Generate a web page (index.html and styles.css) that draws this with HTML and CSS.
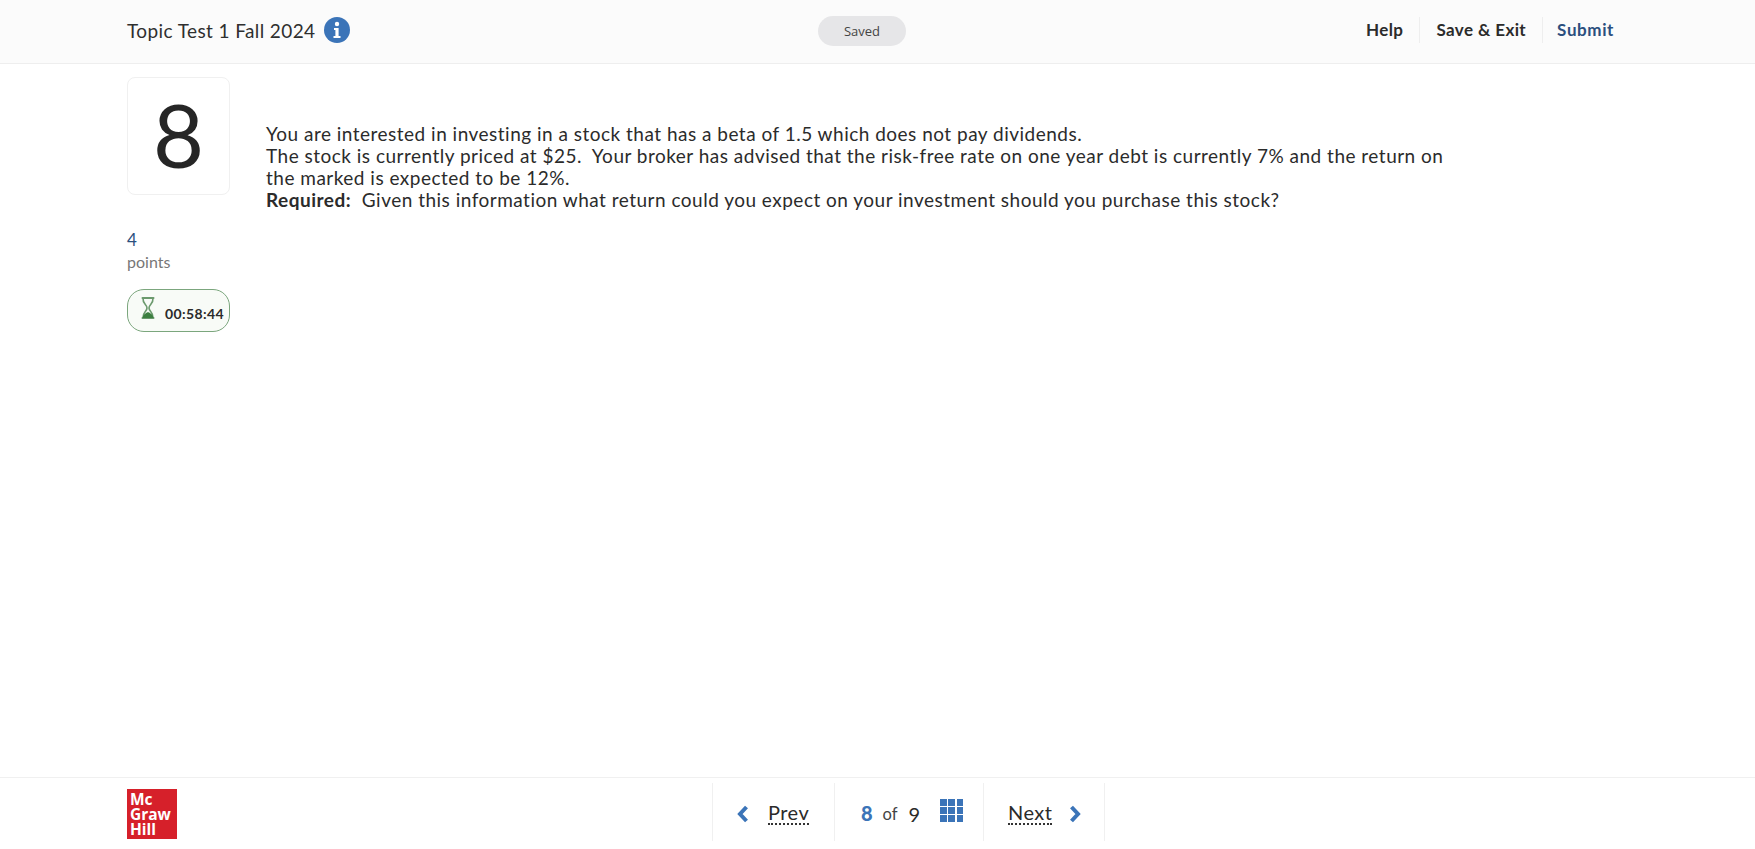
FILE: index.html
```html
<!DOCTYPE html>
<html lang="en">
<head>
<meta charset="utf-8">
<title>Topic Test 1 Fall 2024</title>
<link rel="stylesheet" href="styles.css">
</head>
<body>
<div class="page">
  <header class="header">
    <div class="title-wrap">
      <span class="title">Topic Test 1 Fall 2024</span>
      <svg class="info" viewBox="0 0 26 26" aria-hidden="true"><circle cx="13" cy="13" r="13" fill="#3b74b8"/><circle cx="13" cy="7" r="2.2" fill="#fff"/><path d="M10 11h4.600v8H16.500v2h-7v-2h1.900v-6H10z" fill="#fff"/></svg>
    </div>
    <div class="saved">Saved</div>
    <nav class="actions">
      <span class="action">Help</span>
      <span class="action">Save &amp; Exit</span>
      <span class="action submit">Submit</span>
    </nav>
  </header>
  <main class="main">
    <aside class="side">
      <div class="qnum">8</div>
      <div class="pts">4</div>
      <div class="pts-label">points</div>
      <div class="timer">
        <svg class="glass" viewBox="0 0 16 24" aria-hidden="true"><path d="M2.500 2h11M2.500 22h11" stroke="#6c9a6e" stroke-width="2" fill="none" stroke-linecap="round"/><path d="M3 2c-.5 6 4 6.500 4 10 0 3.500-4.500 4-4 10M13 2c.5 6-4 6.500-4 10 0 3.500 4.500 4 4 10" stroke="#6c9a6e" stroke-width="1.600" fill="none"/><path d="M2.500 22c.5-3.500 3.500-5 5.500-6 2 1 5 2.500 5.500 6z" fill="#3c7f40"/></svg>
        <span class="time">00:58:44</span>
      </div>
    </aside>
    <div class="question">
      <p>You are interested in investing in a stock that has a beta of 1.5 which does not pay dividends.<br>The stock is currently priced at $25.&nbsp; Your broker has advised that the risk-free rate on one year debt is currently 7% and the return on the marked is expected to be 12%.<br><strong>Required:</strong>&nbsp; Given this information what return could you expect on your investment should you purchase this stock?</p>
    </div>
  </main>
  <footer class="footer">
    <div class="logo"><span class="logo-line">Mc</span><span class="logo-line">Graw</span><span class="logo-line">Hill</span></div>
    <div class="pager">
      <div class="cell prev">
        <svg class="chev" viewBox="0 0 12 18" aria-hidden="true"><path d="M9.500 2 3 9l6.500 7" fill="none" stroke="#3b74b8" stroke-width="4"/></svg>
        <span class="link">Prev</span>
      </div>
      <div class="cell count">
        <b class="cur">8</b><span class="of">of</span><span class="total">9</span>
        <span class="grid" aria-hidden="true"><i></i><i></i><i></i><i></i><i></i><i></i><i></i><i></i><i></i></span>
      </div>
      <div class="cell next">
        <span class="link">Next</span>
        <svg class="chev" viewBox="0 0 12 18" aria-hidden="true"><path d="M2.500 2 9 9l-6.500 7" fill="none" stroke="#3b74b8" stroke-width="4"/></svg>
      </div>
    </div>
  </footer>
</div>
</body>
</html>
```
FILE: styles.css
```css
* { box-sizing: border-box; }
html, body { margin: 0; height: 100%; }
body { background: #fff; color: #2b2b2b; font-family: "Lato", "Liberation Sans", sans-serif; }
.page { height: 849px; display: flex; flex-direction: column; overflow: hidden; }

.header { height: 64px; flex: none; background: #fbfbfb; border-bottom: 1px solid #eeeeee; padding: 0 141px 0 127px; display: grid; grid-template-columns: 691px auto 1fr; align-items: center; }
.title-wrap { display: flex; align-items: center; gap: 8px; padding-bottom: 3px; }
.title { font-size: 19px; letter-spacing: 0.4px; color: #2f2f2f; }
.info { width: 26px; height: 26px; }
.saved { width: 88px; height: 30px; border-radius: 15px; background: #e6e6e8; font-size: 13px; color: #444; display: flex; align-items: center; justify-content: center; font-family: "Open Sans", sans-serif; margin-bottom: 2px; }
.actions { justify-self: end; display: flex; align-items: center; padding-bottom: 3px; }
.action { font-size: 17px; font-weight: 700; letter-spacing: 0.4px; color: #2b2b2b; padding: 0 16px; height: 26px; line-height: 26px; border-left: 1px solid #eeeeee; }
.action:first-child { border-left: 0; }
.action.submit { color: #2b4f7e; padding-left: 14px; padding-right: 0; letter-spacing: 0.6px; }

.main { flex: 1; display: flex; padding: 13px 127px 0; }
.side { width: 103px; flex: none; }
.qnum { width: 103px; height: 118px; border: 1px solid #f0f0f0; border-radius: 8px; background: #fff; font-size: 88px; line-height: 112px; text-align: center; color: #262626; font-weight: 400; }
.pts { margin-top: 34px; font-size: 17px; line-height: 22px; color: #2b4f7e; }
.pts-label { font-size: 16px; line-height: 22px; color: #777; }
.timer { margin-top: 16px; width: 103px; height: 43px; border: 1px solid #7ba67d; border-radius: 17px; background: #f8fbf7; display: flex; align-items: center; padding-left: 12px; gap: 9px; }
.glass { width: 16px; height: 24px; margin-top: -6px; flex: none; }
.time { font-size: 14px; font-weight: 700; letter-spacing: 0.4px; color: #2b2b2b; margin-top: 5px; white-space: nowrap; }

.question { width: 1185px; margin-left: 36px; padding-top: 46px; }
.question p { margin: 0; font-size: 19px; line-height: 22px; color: #2b2b2b; letter-spacing: 0.49px; }
.question strong { font-weight: 700; }

.footer { height: 72px; flex: none; border-top: 1px solid #f0f0f0; padding: 0 127px; position: relative; display: flex; align-items: center; }
.logo { width: 50px; height: 50px; background: #d6202a; color: #fff; font-family: "Open Sans", sans-serif; font-size: 15.500px; font-weight: 700; padding: 3px 0 0 3px; margin-top: 1px; }
.logo-line { display: block; height: 15px; line-height: 15px; overflow: hidden; }
.pager { position: absolute; left: 712px; top: 5px; height: 63px; display: flex; }
.cell { height: 58px; display: flex; align-items: center; border-left: 1px solid #f0f0f0; padding-top: 3px; }
.prev { width: 122px; padding-left: 24px; gap: 19px; }
.count { width: 149px; padding-left: 26px; }
.next { width: 122px; padding-left: 24px; gap: 17px; border-right: 1px solid #f0f0f0; }
.chev { width: 12px; height: 18px; flex: none; }
.link { font-size: 20px; letter-spacing: 0.45px; color: #2b2b2b; border-bottom: 2px dotted #333; line-height: 21px; }
.cur { font-size: 20px; font-weight: 900; color: #3b74b8; margin-top: -2px; }
.of { font-size: 16.500px; color: #444; margin-left: 10px; }
.total { font-size: 20px; color: #2b2b2b; margin-left: 11px; }
.grid { width: 23px; height: 23px; margin-left: 20px; margin-top: -6px; display: grid; grid-template-columns: repeat(3, 1fr); gap: 1.500px; }
.grid i { background: #3b74b8; display: block; }
```
